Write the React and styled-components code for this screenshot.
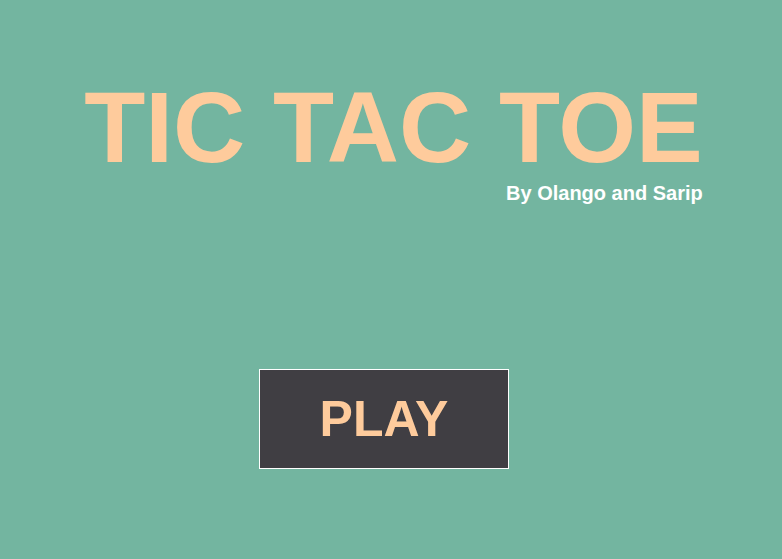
import styled, { createGlobalStyle } from "styled-components";

const GlobalStyle = createGlobalStyle`
  html, body {
    margin: 0;
    padding: 0;
    background: #73b5a0;
  }
  body {
    font-family: "Liberation Sans", Arial, sans-serif;
  }
`;

const Page = styled.div`
  min-height: 100vh;
  display: flex;
  flex-direction: column;
  align-items: center;
  padding-top: 77px;
  box-sizing: border-box;
  background: #73b5a0;
`;

const Header = styled.header`
  display: flex;
  flex-direction: column;
  margin-left: 5px;
`;

const Title = styled.h1`
  margin: 0;
  font-size: 100px;
  font-weight: 700;
  line-height: 1;
  color: #fecb9c;
  white-space: nowrap;
`;

const Credits = styled.p`
  margin: 6px 0 0;
  text-align: right;
  font-size: 20px;
  font-weight: 700;
  line-height: 1;
  color: #ffffff;
`;

const PlayButton = styled.button`
  margin: 166px 14px 0 0;
  width: 250px;
  height: 100px;
  box-sizing: border-box;
  display: flex;
  align-items: center;
  justify-content: center;
  background: #403e43;
  border: 1px solid #ffffff;
  color: #fecb9c;
  font-family: "Liberation Sans", Arial, sans-serif;
  font-size: 50px;
  font-weight: 700;
  cursor: pointer;
  padding: 0;
`;

export default function App() {
  return (
    <>
      <GlobalStyle />
      <Page>
        <Header>
          <Title>TIC TAC TOE</Title>
          <Credits>By Olango and Sarip</Credits>
        </Header>
        <PlayButton>PLAY</PlayButton>
      </Page>
    </>
  );
}
